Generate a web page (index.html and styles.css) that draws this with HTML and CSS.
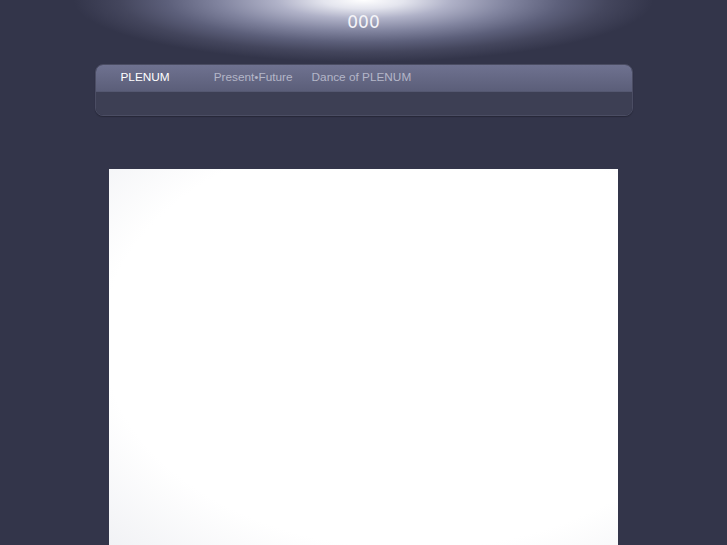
FILE: index.html
```html
<!DOCTYPE html>
<html>
<head>
<meta charset="utf-8">
<link rel="stylesheet" href="styles.css">
</head>
<body>
<div class="page">
  <header class="header">
    <h1 class="title">000</h1>
  </header>
  <nav class="nav">
    <div class="nav-top">
      <a class="nav-item active">PLENUM</a>
      <a class="nav-item">Present•Future</a>
      <a class="nav-item">Dance of PLENUM</a>
    </div>
    <div class="nav-bottom"></div>
  </nav>
  <main class="content">
    <div class="panel"></div>
  </main>
</div>
</body>
</html>
```
FILE: styles.css
```css
html, body {
  margin: 0;
  padding: 0;
  background: #33354a;
  overflow: hidden;
}
body {
  font-family: "Liberation Sans", Arial, sans-serif;
}
.page {
  width: 727px;
  height: 545px;
  display: flex;
  flex-direction: column;
  align-items: center;
}
.header {
  width: 727px;
  height: 64px;
  display: flex;
  justify-content: center;
  background: radial-gradient(ellipse 290px 62px at 50% 0, #ffffff 0%, #e4e5ee 14%, #b0b2c8 30%, #81849f 50%, #5c5f7a 68%, #44465d 84%, #33354a 100%);
}
.title {
  margin: 12px 0 0;
  font-family: "DejaVu Sans", sans-serif;
  font-weight: normal;
  font-size: 17px;
  line-height: 20px;
  color: #f4f4f8;
}
.nav {
  width: 536px;
  height: 50px;
  border: 1px solid #4b4d63;
  border-radius: 8px;
  overflow: hidden;
  display: flex;
  flex-direction: column;
  box-shadow: 0 1px 1px rgba(20,20,30,0.4);
}
.nav-top {
  height: 26px;
  box-sizing: border-box;
  padding-bottom: 3px;
  background: linear-gradient(#6f7290, #5b5e79);
  display: flex;
  align-items: center;
  padding-left: 25px;
}
.nav-bottom {
  flex: 1;
  background: #3d3f54;
  border-top: 1px solid #555871;
}
.nav-item {
  font-size: 11.8px;
  color: #b4b6c8;
}
.nav-item.active {
  color: #ffffff;
  margin-right: 44px;
}
.nav-item + .nav-item {
  margin-right: 19px;
}
.content {
  margin-top: 53px;
  width: 509px;
  flex: 1;
}
.panel {
  height: 100%;
  background: radial-gradient(ellipse at 60% 45%, #ffffff 72%, #f1f2f5 100%);
}
```
